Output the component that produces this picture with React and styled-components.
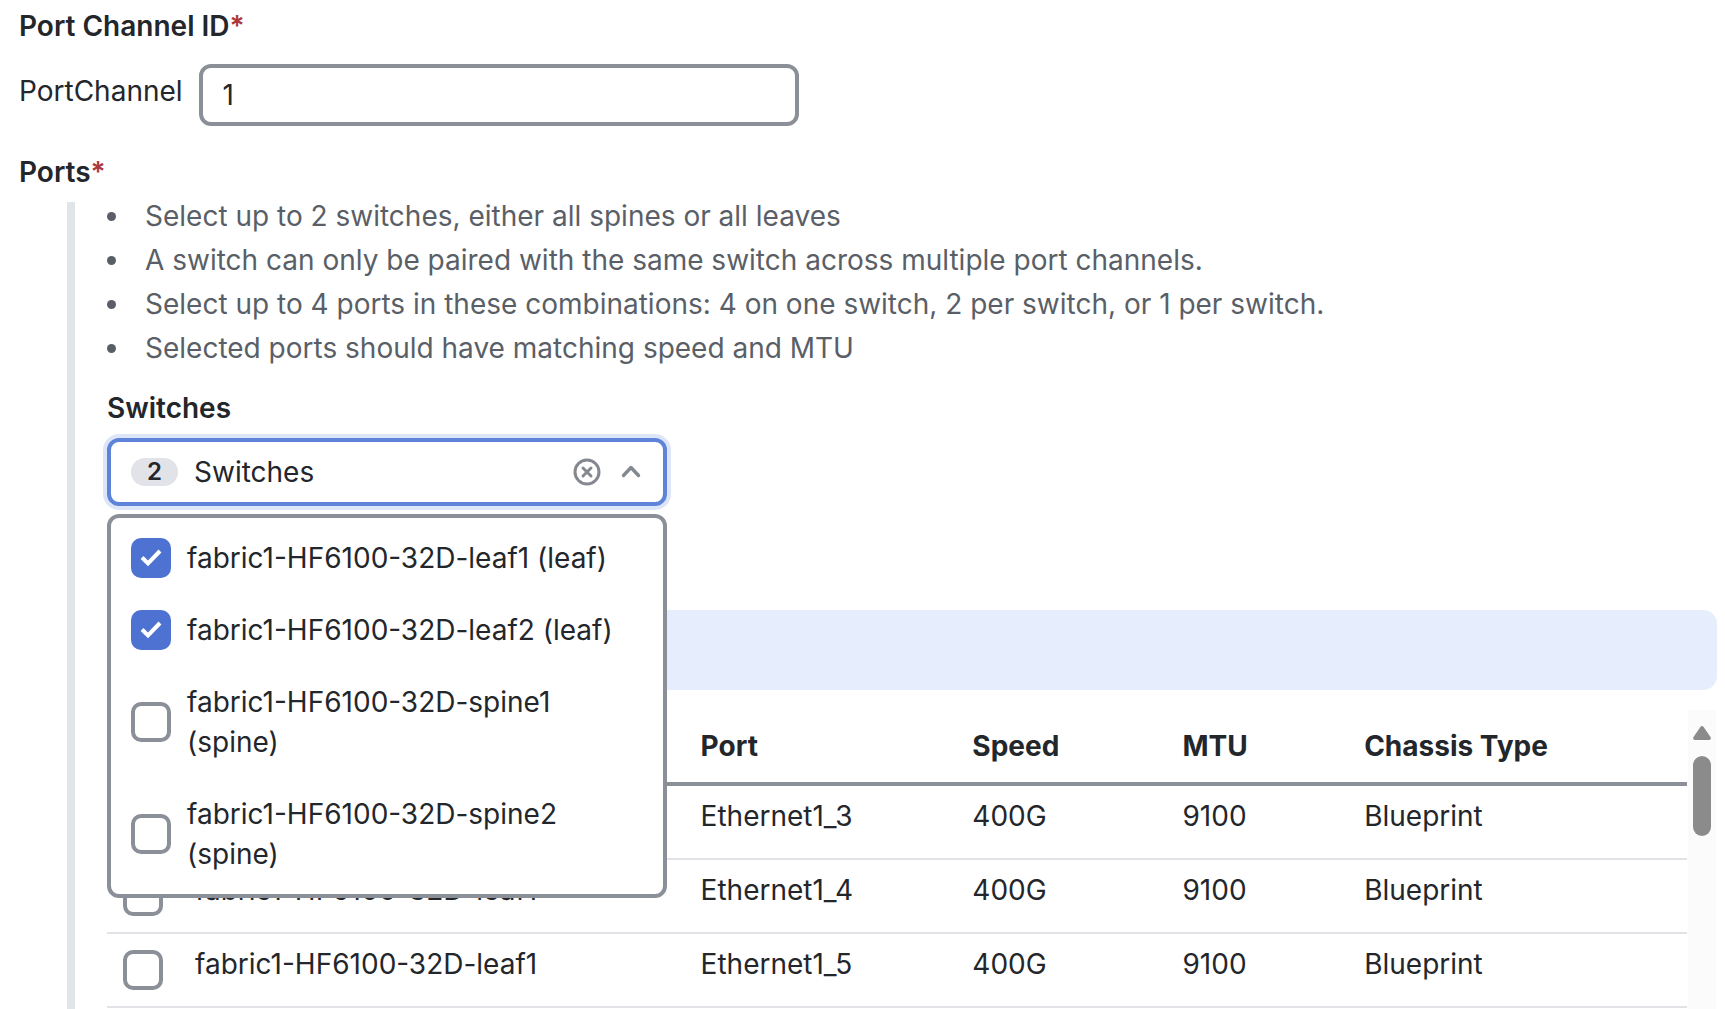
import React from 'react';
import styled, { createGlobalStyle } from 'styled-components';

const GlobalStyle = createGlobalStyle`
  * {
    box-sizing: border-box;
  }

  body {
    margin: 0;
    background-color: #fff;
    color: #23262b;
    font-family: Inter, 'Liberation Sans', sans-serif;
    font-size: 28px;
    line-height: 40px;
    overflow: hidden;
  }

  input, button {
    font: inherit;
    color: inherit;
  }
`;

// Styled components
const Page = styled.main`
  display: flex;
  flex-direction: column;
  min-height: 100vh;
  padding: 6px 8px 0 19px;
`;

const FieldLabel = styled.label`
  display: block;
  font-weight: 600;
`;

const Required = styled.span`
  color: #ad383c;
`;

const IdRow = styled.div`
  display: flex;
  align-items: center;
  gap: 16px;
  margin: 18px 0 26px;
`;

const Prefix = styled.span`
  padding-bottom: 8px;
`;

const TextInput = styled.input`
  width: 600px;
  height: 62px;
  padding: 0 20px;
  border: 4px solid #8b9098;
  border-radius: 12px;
  background-color: #fff;
  outline: none;
`;

const PortsPanel = styled.section`
  display: flex;
  flex-direction: column;
  flex: 1;
  margin: 10px 0 0 48px;
  padding-left: 32px;
  border-left: 8px solid #e1e4e8;
`;

const Hints = styled.ul`
  display: flex;
  flex-direction: column;
  gap: 16px;
  margin: 0 0 26px;
  padding: 0;
  list-style: none;
  color: #5a5f67;
`;

const Hint = styled.li`
  display: flex;
  align-items: center;
  gap: 29px;
  line-height: 28px;

  &::before {
    content: '';
    width: 9px;
    height: 9px;
    border-radius: 50%;
    background-color: #5a5f67;
  }
`;

const SelectWrap = styled.div`
  position: relative;
  width: 560px;
  margin-top: 10px;
`;

const SelectBox = styled.div`
  display: flex;
  align-items: center;
  height: 68px;
  padding: 0 10px 0 20px;
  border: 4px solid #6083da;
  border-radius: 12px;
  background-color: #fff;
  box-shadow: 0 0 0 4px #dde6f8;
`;

const SelectButton = styled.button`
  display: flex;
  flex: 1;
  align-items: center;
  gap: 16px;
  padding: 0;
  border: none;
  background: none;
  cursor: pointer;
`;

const Count = styled.span`
  width: 47px;
  border-radius: 14px;
  background-color: #e1e3e8;
  font-size: 24px;
  font-weight: 600;
  line-height: 28px;
  text-align: center;
`;

const IconButton = styled.button`
  display: flex;
  align-items: center;
  justify-content: center;
  width: 44px;
  height: 44px;
  padding: 0;
  border: none;
  background: none;
  color: #84888f;
  cursor: pointer;
`;

const Menu = styled.div`
  position: absolute;
  top: calc(100% + 8px);
  left: 0;
  right: 0;
  z-index: 10;
  padding: 4px 0;
  border: 4px solid #8b9098;
  border-radius: 12px;
  background-color: #fff;
`;

const Option = styled.label`
  display: flex;
  align-items: center;
  gap: 16px;
  padding: 16px 20px;
  cursor: pointer;
`;

const CheckWrap = styled.span`
  display: grid;
  flex: none;
  width: 40px;
  height: 40px;

  & > * {
    grid-area: 1 / 1;
  }

  svg {
    pointer-events: none;
  }
`;

const CheckInput = styled.input`
  appearance: none;
  width: 40px;
  height: 40px;
  margin: 0;
  border: 4px solid #8b9098;
  border-radius: 10px;
  background-color: #fff;
  cursor: pointer;

  &:checked {
    border-color: #4d72d1;
    background-color: #4d72d1;
  }
`;

const Banner = styled.div`
  height: 80px;
  margin: 104px 0 20px;
  border-radius: 14px;
  background-color: #e6edfd;
`;

const TableArea = styled.div`
  display: flex;
  flex: 1;
  align-items: stretch;
  gap: 1px;
  padding-right: 1px;
`;

const TableHolder = styled.div`
  flex: 1;
`;

const Table = styled.table`
  width: 100%;
  table-layout: fixed;
  border-spacing: 0;
  line-height: 42px;
`;

const Col = styled.col`
  width: ${props => props.$width};
`;

const Th = styled.th`
  padding: 15px 16px;
  border-bottom: 4px solid #8b9098;
  font-weight: 700;
  text-align: left;
`;

const Td = styled.td`
  padding: 9px 16px;
  border-bottom: 2px solid #e1e3e7;
  vertical-align: top;
`;

const CheckTd = styled(Td)`
  padding: 16px;
`;

const Scrollbar = styled.div`
  display: flex;
  flex-direction: column;
  align-items: center;
  gap: 16px;
  width: 28px;
  padding-top: 16px;
  background-color: #fbfbfb;
`;

const Thumb = styled.div`
  width: 18px;
  height: 80px;
  border-radius: 9px;
  background-color: #8b8b8b;
`;

const hints = [
  'Select up to 2 switches, either all spines or all leaves',
  'A switch can only be paired with the same switch across multiple port channels.',
  'Select up to 4 ports in these combinations: 4 on one switch, 2 per switch, or 1 per switch.',
  'Selected ports should have matching speed and MTU',
];

const switches = [
  'fabric1-HF6100-32D-leaf1 (leaf)',
  'fabric1-HF6100-32D-leaf2 (leaf)',
  'fabric1-HF6100-32D-spine1 (spine)',
  'fabric1-HF6100-32D-spine2 (spine)',
];

const ports = ['Ethernet1_3', 'Ethernet1_4', 'Ethernet1_5'].map(port => ({
  name: 'fabric1-HF6100-32D-leaf1',
  port,
  speed: '400G',
  mtu: '9100',
  chassis: 'Blueprint',
}));

const Checkbox = ({ checked, ...rest }) => (
  <CheckWrap>
    <CheckInput type="checkbox" checked={checked} {...rest} />
    {checked && (
      <svg width="40" height="40" viewBox="0 0 40 40" fill="none" stroke="#fff" strokeWidth="4">
        <path d="M11 19.5L17 25.5L29 13" />
      </svg>
    )}
  </CheckWrap>
);

class PortChannelForm extends React.Component {
  state = {
    channelId: '1',
    open: true,
    selected: switches.slice(0, 2),
    selectedPorts: [],
  };

  toggleMenu = () => {
    this.setState(prevState => ({ open: !prevState.open }));
  };

  toggleItem = (key, item) => {
    this.setState(prevState => ({
      [key]: prevState[key].includes(item)
        ? prevState[key].filter(other => other !== item)
        : [...prevState[key], item],
    }));
  };

  render() {
    const { channelId, open, selected, selectedPorts } = this.state;

    return (
      <Page>
        <FieldLabel htmlFor="channel-id">Port Channel ID<Required>*</Required></FieldLabel>
        <IdRow>
          <Prefix>PortChannel</Prefix>
          <TextInput
            id="channel-id"
            value={channelId}
            onChange={e => this.setState({ channelId: e.target.value })}
          />
        </IdRow>

        <FieldLabel as="div" id="ports-label">Ports<Required>*</Required></FieldLabel>
        <PortsPanel aria-labelledby="ports-label">
          <Hints>
            {hints.map(hint => <Hint key={hint}>{hint}</Hint>)}
          </Hints>

          <FieldLabel htmlFor="switches">Switches</FieldLabel>
          <SelectWrap>
            <SelectBox>
              <SelectButton id="switches" type="button" aria-expanded={open} onClick={this.toggleMenu}>
                <Count>{selected.length}</Count>
                Switches
              </SelectButton>
              <IconButton type="button" aria-label="Clear" onClick={() => this.setState({ selected: [] })}>
                <svg width="28" height="28" viewBox="0 0 28 28" fill="none" stroke="currentColor" strokeWidth="3">
                  <circle cx="14" cy="14" r="12" />
                  <path d="M10 10L18 18M18 10L10 18" strokeLinecap="round" />
                </svg>
              </IconButton>
              <IconButton type="button" aria-label="Toggle menu" onClick={this.toggleMenu}>
                <svg width="28" height="28" viewBox="0 0 28 28" fill="none" stroke="currentColor" strokeWidth="3.4">
                  <path d="M6.5 17.5L14 9.5L21.5 17.5" strokeLinecap="round" strokeLinejoin="round" />
                </svg>
              </IconButton>
            </SelectBox>
            {open && (
              <Menu>
                {switches.map(item => (
                  <Option key={item}>
                    <Checkbox
                      checked={selected.includes(item)}
                      onChange={() => this.toggleItem('selected', item)}
                    />
                    {item}
                  </Option>
                ))}
              </Menu>
            )}
          </SelectWrap>

          <Banner />

          <TableArea>
            <TableHolder>
              <Table>
                <colgroup>
                  <Col $width="72px" />
                  <Col $width="32%" />
                  <Col $width="17.2%" />
                  <Col $width="13.3%" />
                  <Col $width="11.5%" />
                  <Col $width="auto" />
                </colgroup>
                <thead>
                  <tr>
                    <Th />
                    <Th />
                    <Th>Port</Th>
                    <Th>Speed</Th>
                    <Th>MTU</Th>
                    <Th>Chassis Type</Th>
                  </tr>
                </thead>
                <tbody>
                  {ports.map(row => (
                    <tr key={row.port}>
                      <CheckTd>
                        <Checkbox
                          aria-label={row.port}
                          checked={selectedPorts.includes(row.port)}
                          onChange={() => this.toggleItem('selectedPorts', row.port)}
                        />
                      </CheckTd>
                      <Td>{row.name}</Td>
                      <Td>{row.port}</Td>
                      <Td>{row.speed}</Td>
                      <Td>{row.mtu}</Td>
                      <Td>{row.chassis}</Td>
                    </tr>
                  ))}
                </tbody>
              </Table>
            </TableHolder>
            <Scrollbar>
              <svg width="18" height="14" viewBox="0 0 18 14" fill="#8b8b8b">
                <path d="M7.2 1.2Q9 -1 10.8 1.2L17.5 11Q18.6 14 16 14H2Q-0.6 14 0.5 11Z" />
              </svg>
              <Thumb />
            </Scrollbar>
          </TableArea>
        </PortsPanel>
      </Page>
    );
  }
}

const App = () => (
  <>
    <GlobalStyle />
    <PortChannelForm />
  </>
);

export default App;
